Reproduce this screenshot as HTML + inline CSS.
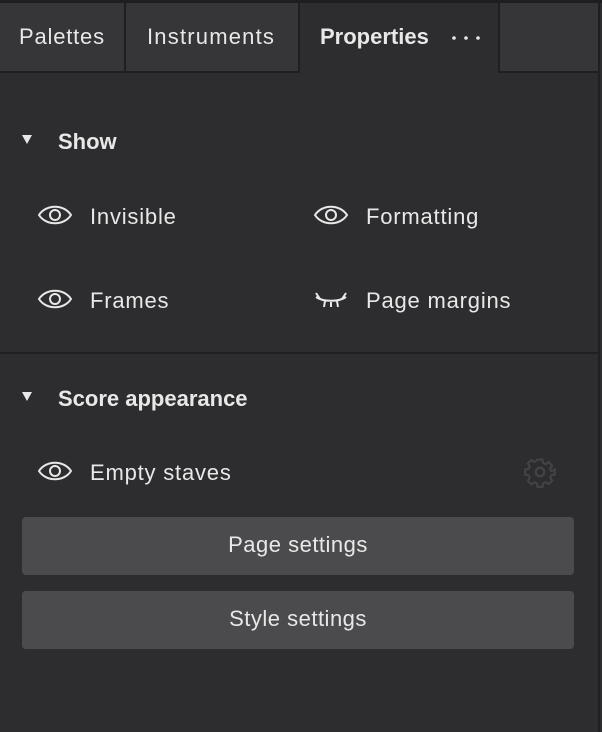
<!DOCTYPE html><html><head><style>
body{margin:0;width:602px;height:732px;background:#2d2d2f;font-family:"Liberation Sans",sans-serif;color:#e8e8e8;position:relative;overflow:hidden}
.top{position:absolute;left:0;top:0;width:602px;height:3px;background:#1e1e20}
.tab{position:absolute;top:3px;height:68px;background:#363638;border-right:2px solid #1f1f21;border-bottom:2px solid #1f1f21;box-sizing:content-box}
.t{position:absolute;font-size:22px;white-space:nowrap;letter-spacing:0.8px}
.b{font-weight:bold;letter-spacing:0}
.eye{position:absolute}
.btn{position:absolute;left:22px;width:552px;height:58px;background:#4b4b4d;border-radius:4px;text-align:center;line-height:56px;font-size:22px;letter-spacing:0.5px}
.tri{position:absolute;width:0;height:0;border-left:5px solid transparent;border-right:5px solid transparent;border-top:9px solid #e8e8e8}
</style></head><body>
<div class="top"></div>
<div class="tab" style="left:0;width:124px"></div>
<div class="tab" style="left:126px;width:172px"></div>
<div class="t" style="left:19px;top:24px">Palettes</div>
<div class="t" style="left:147px;top:24px;letter-spacing:1.2px">Instruments</div>
<div style="position:absolute;left:300px;top:3px;width:198px;height:70px;background:#2d2d2f"></div>
<div class="t b" style="left:320px;top:24px">Properties</div>
<svg style="position:absolute;left:450px;top:35px" width="34" height="6"><circle cx="4" cy="3" r="1.8" fill="#e8e8e8"/><circle cx="16" cy="3" r="1.8" fill="#e8e8e8"/><circle cx="28" cy="3" r="1.8" fill="#e8e8e8"/></svg>
<div class="tab" style="left:498px;width:98px;border-left:2px solid #1f1f21"></div>
<div style="position:absolute;left:598px;top:68px;width:2px;height:664px;background:#202022"></div>
<div class="tri" style="left:22px;top:135px"></div>
<div class="t b" style="left:58px;top:129px">Show</div>
<svg class="eye" style="left:37px;top:203px" width="36" height="24" viewBox="0 0 36 24"><path d="M2 12C9 1 27 1 34 12C27 23 9 23 2 12Z" fill="none" stroke="#e8e8e8" stroke-width="2"/><circle cx="18" cy="12" r="5" fill="none" stroke="#e8e8e8" stroke-width="2"/></svg>
<div class="t" style="left:90px;top:204px">Invisible</div>
<svg class="eye" style="left:313px;top:203px" width="36" height="24" viewBox="0 0 36 24"><path d="M2 12C9 1 27 1 34 12C27 23 9 23 2 12Z" fill="none" stroke="#e8e8e8" stroke-width="2"/><circle cx="18" cy="12" r="5" fill="none" stroke="#e8e8e8" stroke-width="2"/></svg>
<div class="t" style="left:366px;top:204px">Formatting</div>
<svg class="eye" style="left:37px;top:287px" width="36" height="24" viewBox="0 0 36 24"><path d="M2 12C9 1 27 1 34 12C27 23 9 23 2 12Z" fill="none" stroke="#e8e8e8" stroke-width="2"/><circle cx="18" cy="12" r="5" fill="none" stroke="#e8e8e8" stroke-width="2"/></svg>
<div class="t" style="left:90px;top:288px">Frames</div>
<svg class="eye" style="left:313px;top:287px" width="36" height="24" viewBox="0 0 36 24"><path d="M3 10C10 15 26 15 33 10M3 6L7 12M33 6L29 12M12 14L11 20M24 14L25 20M18 15V20" fill="none" stroke="#e8e8e8" stroke-width="2"/></svg>
<div class="t" style="left:366px;top:288px">Page margins</div>
<div style="position:absolute;left:0;top:352px;width:598px;height:2px;background:#202022"></div>
<div class="tri" style="left:22px;top:392px"></div>
<div class="t b" style="left:58px;top:386px">Score appearance</div>
<svg class="eye" style="left:37px;top:459px" width="36" height="24" viewBox="0 0 36 24"><path d="M2 12C9 1 27 1 34 12C27 23 9 23 2 12Z" fill="none" stroke="#e8e8e8" stroke-width="2"/><circle cx="18" cy="12" r="5" fill="none" stroke="#e8e8e8" stroke-width="2"/></svg>
<div class="t" style="left:90px;top:460px">Empty staves</div>
<svg style="position:absolute;left:523px;top:455px" width="34" height="34" viewBox="0 0 24 24"><path d="M10 2h4l.6 2.8 2 .9 2.4-1.6 2.8 2.8-1.6 2.4.9 2L24 10v4l-2.8.6-.9 2 1.6 2.4-2.8 2.8-2.4-1.6-2 .9L14 24h-4l-.6-2.8-2-.9-2.4 1.6-2.8-2.8 1.6-2.4-.9-2L0 14v-4l2.8-.6.9-2L2.1 5 4.9 2.2 7.3 3.8l2-.9Z" transform="translate(1.5 1.5) scale(.875)" fill="none" stroke="#444446" stroke-width="1.6"/><circle cx="12" cy="12" r="3" fill="none" stroke="#444446" stroke-width="1.6"/></svg>
<div class="btn" style="top:517px">Page settings</div>
<div class="btn" style="top:591px">Style settings</div>
</body></html>
